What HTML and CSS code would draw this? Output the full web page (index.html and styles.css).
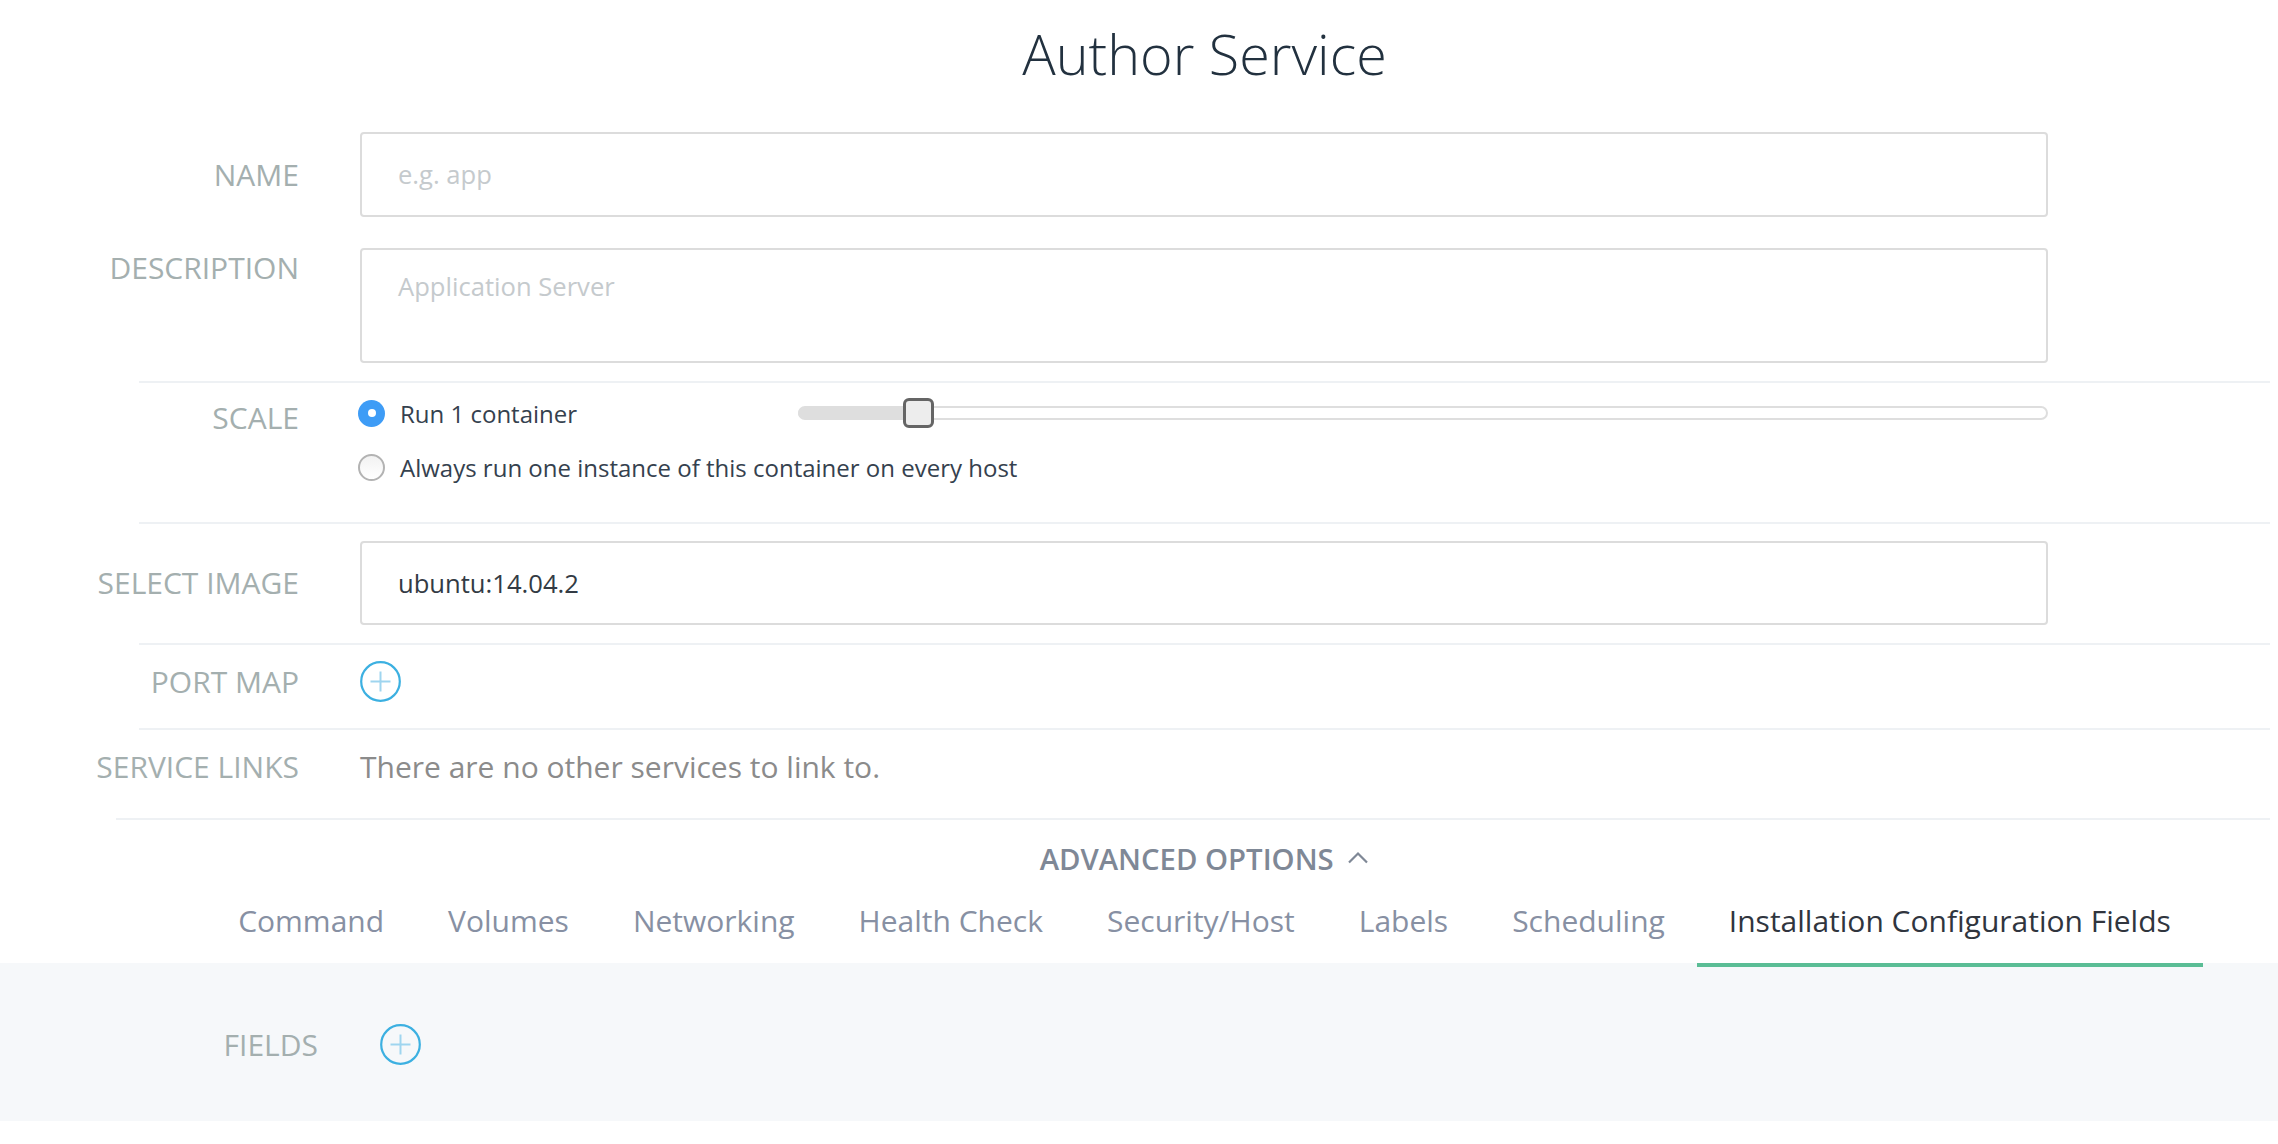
FILE: index.html
```html
<!DOCTYPE html>
<html lang="en">
<head>
<meta charset="utf-8">
<title>Author Service</title>
<link rel="stylesheet" href="styles.css">
</head>
<body>
<div class="main">
  <h1 class="title">Author Service</h1>

  <div class="row row-center row-name">
    <label class="lbl">NAME</label>
    <div class="field"><input class="txt" type="text" placeholder="e.g. app"></div>
  </div>

  <div class="row row-top row-desc">
    <label class="lbl">DESCRIPTION</label>
    <div class="field"><textarea class="txt area" placeholder="Application Server"></textarea></div>
  </div>

  <div class="row row-top sec sec-scale">
    <label class="lbl lbl-scale">SCALE</label>
    <div class="field">
      <div class="opt opt-first">
        <div class="opt-left"><span class="radio on"></span><span class="opt-text">Run 1 container</span></div>
        <div class="slider"><div class="slider-fill"></div><div class="slider-thumb"></div></div>
      </div>
      <div class="opt opt-second">
        <span class="radio"></span><span class="opt-text">Always run one instance of this container on every host</span>
      </div>
    </div>
  </div>

  <div class="row row-center sec sec-image">
    <label class="lbl">SELECT IMAGE</label>
    <div class="field"><input class="txt val" type="text" value="ubuntu:14.04.2"></div>
  </div>

  <div class="row row-center sec sec-port">
    <label class="lbl">PORT MAP</label>
    <div class="field">
      <span class="plus">
        <svg width="41" height="41" viewBox="0 0 41 41"><circle cx="20.5" cy="20.5" r="19.3" fill="none" stroke="#3cb0e1" stroke-width="2.2"/><path d="M10.5 20.5h20M20.5 10.5v20" stroke="#9fd5ef" stroke-width="2"/></svg>
      </span>
    </div>
  </div>

  <div class="row row-center sec sec-links">
    <label class="lbl">SERVICE LINKS</label>
    <div class="field"><span class="muted">There are no other services to link to.</span></div>
  </div>

  <div class="advanced">
    <div class="adv-title">ADVANCED OPTIONS
      <svg class="chev" width="22" height="13" viewBox="0 0 22 13"><polyline points="2,11.5 11,2.5 20,11.5" fill="none" stroke="#7f8896" stroke-width="2.2"/></svg>
    </div>
    <ul class="tabs">
      <li class="tab">Command</li>
      <li class="tab">Volumes</li>
      <li class="tab">Networking</li>
      <li class="tab">Health Check</li>
      <li class="tab">Security/Host</li>
      <li class="tab">Labels</li>
      <li class="tab">Scheduling</li>
      <li class="tab active">Installation Configuration Fields</li>
    </ul>
  </div>
</div>

<div class="panel">
  <div class="panel-row">
    <label class="lbl">FIELDS</label>
    <span class="plus">
      <svg width="41" height="41" viewBox="0 0 41 41"><circle cx="20.5" cy="20.5" r="19.3" fill="none" stroke="#3cb0e1" stroke-width="2.2"/><path d="M10.5 20.5h20M20.5 10.5v20" stroke="#9fd5ef" stroke-width="2"/></svg>
    </span>
  </div>
</div>
</body>
</html>
```

FILE: styles.css
```css
* { box-sizing: border-box; }

html, body {
  margin: 0;
  padding: 0;
  background: #ffffff;
}

body {
  font-family: "Open Sans", "Noto Sans", "Liberation Sans", sans-serif;
  width: 2278px;
  height: 1144px;
  overflow: hidden;
}

.main {
  padding-left: 139px;
  padding-right: 8px;
}

.title {
  margin: 0;
  padding-top: 20px;
  font-size: 55.7px;
  line-height: 67px;
  font-weight: 300;
  color: #22313f;
  text-align: center;
}

.row {
  display: flex;
  gap: 61px;
}

.row-center { align-items: center; }
.row-top { align-items: flex-start; }

.row-name { margin-top: 45px; }
.row-desc { margin-top: 31px; margin-bottom: 18px; }

.sec { border-top: 2px solid #eef1f4; }

.lbl {
  flex: 0 0 160px;
  width: 160px;
  text-align: right;
  white-space: nowrap;
  direction: rtl;
  font-size: 30px;
  line-height: 40px;
  font-weight: 400;
  color: #a4afaf;
}

.field {
  flex: 0 0 1688px;
  width: 1688px;
}

.txt {
  display: block;
  width: 100%;
  height: 85px;
  border: 2px solid #dcdcdc;
  border-radius: 4px;
  padding: 0 36px;
  font-family: "Open Sans", "Noto Sans", sans-serif;
  font-size: 25.6px;
  color: #333b44;
  background: #fff;
  outline: none;
}

.txt::placeholder { color: #c5cacd; }

.area {
  height: 115px;
  padding-top: 19px;
  line-height: 36px;
  resize: none;
}

.sec-scale { padding-top: 12px; padding-bottom: 37px; }
.lbl-scale { margin-top: 3px; }

.opt {
  display: flex;
  align-items: center;
  height: 36px;
}

.opt-second { margin-top: 18px; }

.opt-left {
  flex: 0 0 438px;
  display: flex;
  align-items: center;
}

.radio {
  flex: 0 0 27px;
  width: 27px;
  height: 27px;
  border-radius: 50%;
  border: 2px solid #b3b3b3;
  background: linear-gradient(#f2f2f2, #ffffff);
  margin-left: -2px;
  margin-right: 15px;
  display: flex;
  align-items: center;
  justify-content: center;
}

.radio.on {
  border: none;
  background: #3e9cf6;
}

.radio.on::after {
  content: "";
  width: 8px;
  height: 8px;
  border-radius: 50%;
  background: #ffffff;
}

.opt-text {
  font-size: 24px;
  color: #35414e;
  white-space: nowrap;
}

.slider {
  position: relative;
  flex: 1;
  height: 14px;
  border: 2px solid #dedede;
  border-radius: 7px;
  background: #fff;
}

.slider-fill {
  width: 107px;
  height: 100%;
  margin-left: -2px;
  background: #dedede;
  border-radius: 7px 0 0 7px;
}

.slider-thumb {
  position: absolute;
  left: 103px;
  top: -10px;
  width: 31px;
  height: 30px;
  border: 3px solid #656565;
  border-radius: 6px;
  background: #ededed;
}

.sec-image { padding-top: 17px; padding-bottom: 18px; }
.sec-image .txt { height: 84px; }

.sec-port { padding-top: 16px; padding-bottom: 26px; }

.plus {
  display: block;
  width: 41px;
  height: 41px;
}

.plus svg { display: block; }

.sec-links { padding-top: 17px; padding-bottom: 31px; }

.muted {
  font-size: 30px;
  line-height: 40px;
  color: #8b8b8b;
  white-space: nowrap;
}

.advanced {
  margin-left: -23px;
  padding-left: 23px;
  border-top: 2px solid #eef1f4;
  padding-top: 19px;
}

.adv-title {
  text-align: center;
  font-size: 29.3px;
  line-height: 40px;
  font-weight: 600;
  color: #7f8896;
}

.chev {
  display: inline-block;
  vertical-align: 6px;
  margin-left: 6px;
}

.tabs {
  list-style: none;
  margin: 0 0 -4px 0;
  padding: 0;
  display: flex;
  justify-content: center;
  position: relative;
  z-index: 1;
}

.tab {
  padding: 22px 32px;
  border-bottom: 4px solid transparent;
  font-size: 30px;
  line-height: 40px;
  color: #8790a3;
  white-space: nowrap;
}

.tab.active {
  color: #30353e;
  border-bottom-color: #5abd95;
}

.panel {
  background: #f6f8fa;
  height: 158px;
  padding-top: 61px;
}

.panel-row {
  display: flex;
  align-items: center;
  gap: 62px;
  padding-left: 158px;
}
```
